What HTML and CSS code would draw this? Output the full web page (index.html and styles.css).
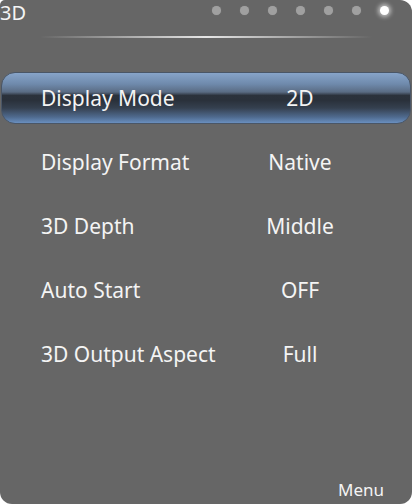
FILE: index.html
```html
<!DOCTYPE html>
<html>
<head>
<meta charset="utf-8">
<link rel="stylesheet" href="styles.css">
</head>
<body>
<div class="screen">
  <div class="header">
    <div class="title">3D</div>
    <div class="dots">
      <span class="dot"></span><span class="dot"></span><span class="dot"></span><span class="dot"></span><span class="dot"></span><span class="dot"></span><span class="dot active"></span>
    </div>
  </div>
  <div class="divider"></div>
  <ul class="list">
    <li class="row selected"><span class="label">Display Mode</span><span class="value">2D</span></li>
    <li class="row"><span class="label">Display Format</span><span class="value">Native</span></li>
    <li class="row"><span class="label">3D Depth</span><span class="value">Middle</span></li>
    <li class="row"><span class="label">Auto Start</span><span class="value">OFF</span></li>
    <li class="row"><span class="label">3D Output Aspect</span><span class="value">Full</span></li>
  </ul>
  <div class="footer"><span class="menu">Menu</span></div>
</div>
</body>
</html>
```
FILE: styles.css
```css
html, body {
  margin: 0;
  padding: 0;
  background: #ffffff;
}
.screen {
  width: 412px;
  height: 504px;
  background: #666666;
  border-radius: 5px 12px 12px 12px;
  display: flex;
  flex-direction: column;
  font-family: "Noto Sans", "Open Sans", sans-serif;
  color: #f4f4f4;
  overflow: hidden;
}
.header {
  height: 24px;
  display: flex;
  align-items: flex-start;
  justify-content: space-between;
}
.title {
  font-size: 20px;
  line-height: 28px;
  margin-top: -1px;
}
.dots {
  display: flex;
  gap: 19px;
  margin-top: 6px;
  margin-right: 23px;
}
.dot {
  width: 9px;
  height: 9px;
  border-radius: 50%;
  background: #a0a0a0;
  box-shadow: 0 0 1px 0 #8a8a8a;
}
.dot.active {
  background: #ffffff;
  box-shadow: 0 0 4px 2px rgba(255,255,255,0.6);
}
.divider {
  margin: 12px 40px 0 40px;
  height: 2px;
  background: linear-gradient(to right, rgba(200,200,200,0) 0%, rgba(210,210,210,0.6) 25%, #e6e6e6 50%, rgba(210,210,210,0.6) 75%, rgba(200,200,200,0) 100%);
}
.list {
  list-style: none;
  margin: 34px 0 0 0;
  padding: 0;
  display: flex;
  flex-direction: column;
  gap: 12px;
}
.row {
  height: 52px;
  margin: 0 1px;
  display: flex;
  align-items: center;
  font-size: 21px;
  border-radius: 14px;
  border: 1px solid transparent;
  box-sizing: border-box;
}
.row.selected {
  border-color: #4a5666;
  background: linear-gradient(to bottom, #87a4c9 0%, #6f8aac 22%, #5a6c84 38%, #2b323c 45%, #2a313b 55%, #35404f 70%, #4f6a8e 88%, #6a8fbf 100%);
}
.label {
  box-sizing: border-box;
  width: 246px;
  padding-left: 39px;
  white-space: nowrap;
}
.value {
  width: 104px;
  text-align: center;
}
.footer {
  margin-top: auto;
  height: 24px;
  display: flex;
  justify-content: flex-end;
}
.menu {
  font-size: 17px;
  line-height: 20px;
  margin-right: 28px;
}
```
